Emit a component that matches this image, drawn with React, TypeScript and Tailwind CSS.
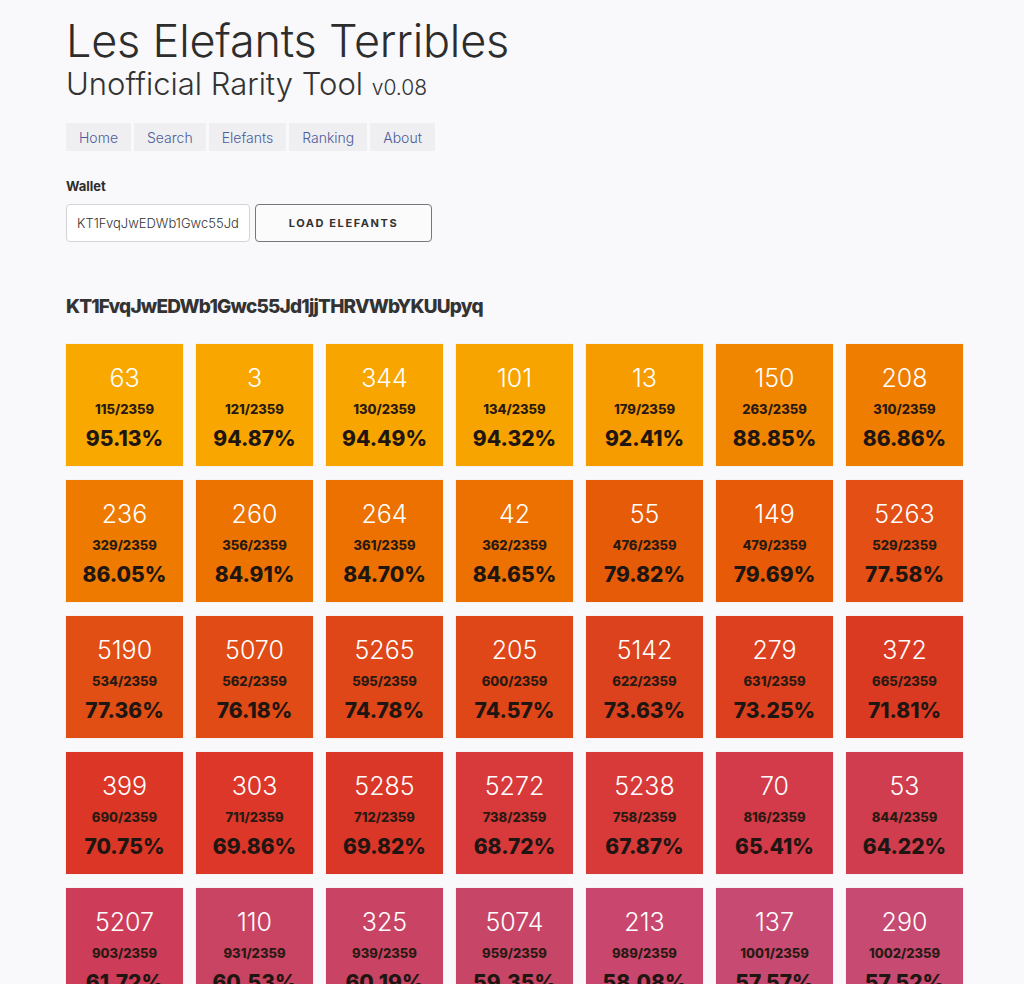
import { useState } from 'react'

type Elefant = { id: number; rank: number; score: string; bg: string }

const TOTAL = 2359

// tile colour steps from amber (rarest) down to rose
const elefants: Elefant[] = [
  { id: 63, rank: 115, score: '95.13', bg: 'bg-[#f9a800]' },
  { id: 3, rank: 121, score: '94.87', bg: 'bg-[#f9a700]' },
  { id: 344, rank: 130, score: '94.49', bg: 'bg-[#f8a500]' },
  { id: 101, rank: 134, score: '94.32', bg: 'bg-[#f8a400]' },
  { id: 13, rank: 179, score: '92.41', bg: 'bg-[#f69b00]' },
  { id: 150, rank: 263, score: '88.85', bg: 'bg-[#f08600]' },
  { id: 208, rank: 310, score: '86.86', bg: 'bg-[#ee7d00]' },

  { id: 236, rank: 329, score: '86.05', bg: 'bg-[#ee7a00]' },
  { id: 260, rank: 356, score: '84.91', bg: 'bg-[#ed7300]' },
  { id: 264, rank: 361, score: '84.70', bg: 'bg-[#ec7100]' },
  { id: 42, rank: 362, score: '84.65', bg: 'bg-[#ec7100]' },
  { id: 55, rank: 476, score: '79.82', bg: 'bg-[#e65b08]' },
  { id: 149, rank: 479, score: '79.69', bg: 'bg-[#e65a08]' },
  { id: 5263, rank: 529, score: '77.58', bg: 'bg-[#e34f14]' },

  { id: 5190, rank: 534, score: '77.36', bg: 'bg-[#e24f14]' },
  { id: 5070, rank: 562, score: '76.18', bg: 'bg-[#e04b16]' },
  { id: 5265, rank: 595, score: '74.78', bg: 'bg-[#df4718]' },
  { id: 205, rank: 600, score: '74.57', bg: 'bg-[#df4618]' },
  { id: 5142, rank: 622, score: '73.63', bg: 'bg-[#dd421e]' },
  { id: 279, rank: 631, score: '73.25', bg: 'bg-[#dc401e]' },
  { id: 372, rank: 665, score: '71.81', bg: 'bg-[#db3a22]' },

  { id: 399, rank: 690, score: '70.75', bg: 'bg-[#dc3626]' },
  { id: 303, rank: 711, score: '69.86', bg: 'bg-[#dc3728]' },
  { id: 5285, rank: 712, score: '69.82', bg: 'bg-[#db3729]' },
  { id: 5272, rank: 738, score: '68.72', bg: 'bg-[#d8393a]' },
  { id: 5238, rank: 758, score: '67.87', bg: 'bg-[#d83a3a]' },
  { id: 70, rank: 816, score: '65.41', bg: 'bg-[#d33a4a]' },
  { id: 53, rank: 844, score: '64.22', bg: 'bg-[#d03d4e]' },

  { id: 5207, rank: 903, score: '61.72', bg: 'bg-[#cd3d5a]' },
  { id: 110, rank: 931, score: '60.53', bg: 'bg-[#c94362]' },
  { id: 325, rank: 939, score: '60.19', bg: 'bg-[#c94464]' },
  { id: 5074, rank: 959, score: '59.35', bg: 'bg-[#c74668]' },
  { id: 213, rank: 989, score: '58.08', bg: 'bg-[#c9476e]' },
  { id: 137, rank: 1001, score: '57.57', bg: 'bg-[#c64a72]' },
  { id: 290, rank: 1002, score: '57.52', bg: 'bg-[#c64a72]' },
]

const navItems = ['Home', 'Search', 'Elefants', 'Ranking', 'About']

const WALLET = 'KT1FvqJwEDWb1Gwc55Jd1jjTHRVWbYKUUpyq'

function Tile({ e }: { e: Elefant }) {
  return (
    <div className={`${e.bg} w-[117px] h-[122px] flex flex-col items-center pt-[19px] shadow-[0_0_1px_rgba(0,0,0,0.15)]`}>
      <div className="text-white text-[25px] font-light leading-[30px]">{e.id}</div>
      <div className="text-[#2a1a12] text-[13px] font-extrabold leading-4 mt-[8px]">
        {e.rank}/{TOTAL}
      </div>
      <div className="text-[#1f1612] text-[21px] font-extrabold leading-[26px] mt-[9px]">{e.score}%</div>
    </div>
  )
}

export default function App() {
  const [wallet, setWallet] = useState(WALLET)

  return (
    <div className="min-h-screen bg-[#f9f8fa] font-['Inter',sans-serif] text-[#333]">
      <div className="pl-[66px] pt-[15px]">
        {/* Header */}
        <h1 className="text-[45px] font-light leading-[52px] text-[#2d2d2d] tracking-[-0.2px]">
          Les Elefants Terribles
        </h1>
        <h2 className="text-[31px] font-light leading-[34px] text-[#333]">
          Unofficial Rarity Tool <span className="text-[21px]">v0.08</span>
        </h2>

        {/* Nav */}
        <nav className="flex gap-[3px] mt-[18px]">
          {navItems.map((n) => (
            <a
              key={n}
              href="#"
              className="h-[28px] px-[13px] flex items-center bg-[#efeff2] text-[#4b5b9a] text-[14px] font-light"
            >
              {n}
            </a>
          ))}
        </nav>

        {/* Wallet form */}
        <div className="mt-[26px] text-[13px] leading-[19px] font-bold text-[#2d2d2d]">Wallet</div>
        <div className="flex gap-[5px] mt-[8px]">
          <input
            value={wallet}
            onChange={(ev) => setWallet(ev.target.value)}
            className="w-[184px] h-[38px] bg-white border border-[#d4d4d8] rounded-[4px] px-[10px] text-[13px] text-[#333] font-light outline-none"
          />
          <button className="w-[177px] h-[38px] border border-[#777] rounded-[4px] text-[11px] font-bold tracking-[1.6px] text-[#333] bg-[#fbfbfc]">
            LOAD ELEFANTS
          </button>
        </div>

        <h3 className="mt-[53px] text-[19px] font-extrabold text-[#333] tracking-[-0.8px] leading-6">{wallet}</h3>

        {/* Elefant tiles */}
        <div className="grid grid-cols-[repeat(7,117px)] gap-x-[13px] gap-y-[14px] mt-[25px] pb-10">
          {elefants.map((e) => (
            <Tile key={e.id} e={e} />
          ))}
        </div>
      </div>
    </div>
  )
}
